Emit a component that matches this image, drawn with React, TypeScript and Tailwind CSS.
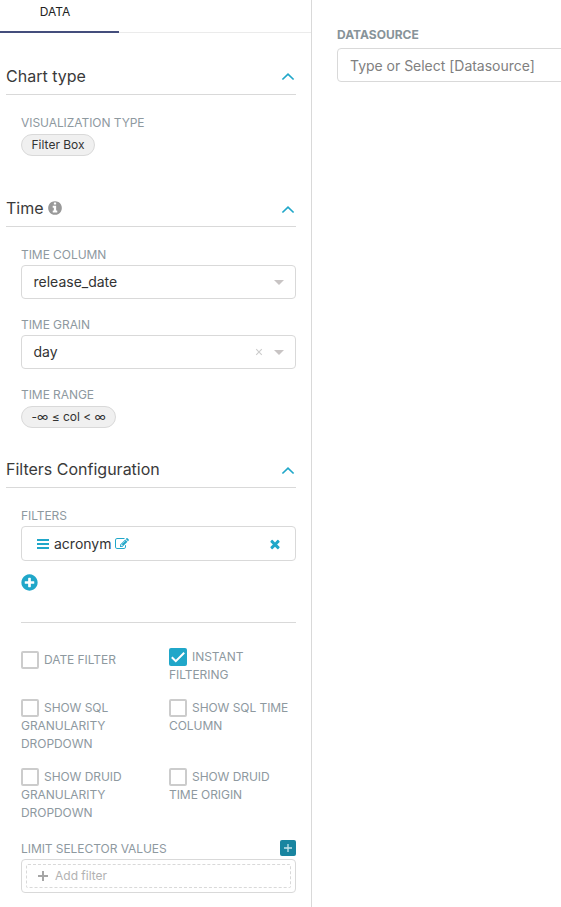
import React from "react";

const INFO =
  "M1152 1376v-160q0-14-9-23t-23-9h-96v-512q0-14-9-23t-23-9h-320q-14 0-23 9t-9 23v160q0 14 9 23t23 9h96v320h-96q-14 0-23 9t-9 23v160q0 14 9 23t23 9h448q14 0 23-9t9-23zm-128-896v-160q0-14-9-23t-23-9h-192q-14 0-23 9t-9 23v160q0 14 9 23t23 9h192q14 0 23-9t9-23zm640 416q0 209-103 385.5t-279.5 279.5-385.5 103-385.5-103-279.5-279.5-103-385.5 103-385.5 279.5-279.5 385.5-103 385.5 103 279.5 279.5 103 385.5z";
const EDIT =
  "M888 1184l116-116-152-152-116 116v56h96v96h56zm440-720q-16-16-33 1l-350 350q-17 17-1 33t33-1l350-350q17-17 1-33zm80 594v190q0 119-84.5 203.5t-203.5 84.5h-832q-119 0-203.5-84.5t-84.5-203.5v-832q0-119 84.5-203.5t203.5-84.5h832q63 0 117 25 15 7 18 23 3 17-9 29l-49 49q-14 14-32 8-23-6-45-6h-832q-66 0-113 47t-47 113v832q0 66 47 113t113 47h832q66 0 113-47t47-113v-126q0-13 9-22l64-64q15-15 35-7t20 29zm-96-738l288 288-672 672h-288v-288zm444 132l-92 92-288-288 92-92q28-28 68-28t68 28l152 152q28 28 28 68t-28 68z";
const TIMES =
  "M1490 1322q0 40-28 68l-136 136q-28 28-68 28t-68-28l-294-294-294 294q-28 28-68 28t-68-28l-136-136q-28-28-28-68t28-68l294-294-294-294q-28-28-28-68t28-68l136-136q28-28 68-28t68 28l294 294 294-294q28-28 68-28t68 28l136 136q28 28 28 68t-28 68l-294 294 294 294q28 28 28 68z";
const PLUS_CIRCLE =
  "M1344 960v-128q0-26-19-45t-45-19h-256v-256q0-26-19-45t-45-19h-128q-26 0-45 19t-19 45v256h-256q-26 0-45 19t-19 45v128q0 26 19 45t45 19h256v256q0 26 19 45t45 19h128q26 0 45-19t19-45v-256h256q26 0 45-19t19-45zm320-64q0 209-103 385.5t-279.5 279.5-385.5 103-385.5-103-279.5-279.5-103-385.5 103-385.5 279.5-279.5 385.5-103 385.5 103 279.5 279.5 103 385.5z";

function Glyph({ d, className }: { d: string; className: string }) {
  return (
    <svg viewBox="0 0 1792 1792" fill="currentColor" className={className}>
      <path d={d} />
    </svg>
  );
}

function SectionHeader({ title, info, chevron = "mt-[15px]" }: { title: string; info?: boolean; chevron?: string }) {
  return (
    <div className="ml-1.5 flex h-9 w-[290px] items-start justify-between border-b border-[#d9d9d9]">
      <h2 className="flex h-[33px] items-center text-base text-[#3a3a3a]">
        {title}
        {info && <Glyph d={INFO} className="mt-px ml-[3px] size-4 text-[#999]" />}
      </h2>
      <svg
        viewBox="0 0 14 10"
        className={"mr-px h-2.5 w-3.5 " + chevron}
        fill="none"
        stroke="#20a7c9"
        strokeWidth="1.7"
      >
        <path d="M1.4 7.5 7 2.2l5.6 5.3" />
      </svg>
    </div>
  );
}

function Label({ children }: { children: React.ReactNode }) {
  return <div className="h-5 text-xs leading-5 tracking-[-0.06px] text-[#8e999f]">{children}</div>;
}

function Pill({ children }: { children: React.ReactNode }) {
  return (
    <span className="flex h-[22px] w-fit items-center rounded-full border border-[#d9d9d9] bg-[#f0f0f0] px-[9.5px] text-xs whitespace-nowrap text-[#333]">
      {children}
    </span>
  );
}

function Select({ value, clearable }: { value: string; clearable?: boolean }) {
  return (
    <div className="flex h-[34px] items-center rounded border border-[#d9d9d9] pr-[11px] pl-[11.5px] text-sm text-[#333]">
      <span className="flex-1">{value}</span>
      {clearable && (
        <svg viewBox="0 0 8 8" className="mr-[11px] size-2" stroke="#ccc" strokeWidth="1.1">
          <path d="M1.2 1.2l5.6 5.6M6.8 1.2 1.2 6.8" />
        </svg>
      )}
      <span className="border-x-[5px] border-t-[5px] border-x-transparent border-t-[#c8c4c4]" />
    </div>
  );
}

function Check({ lines, checked }: { lines: string[]; checked?: boolean }) {
  return (
    <div className="w-[148px] shrink-0 text-xs leading-[18px] tracking-[-0.06px] text-[#8e999f]">
      <div className="flex h-[18px]">
        {checked ? (
          <svg viewBox="0 0 18 18" className="mr-[5px] size-[18px]">
            <rect width="18" height="18" rx="2" fill="#20a7c9" />
            <path d="M2.8 9.2 6.8 13.2 15.2 4.8" fill="none" stroke="#fff" strokeWidth="2" />
          </svg>
        ) : (
          <span className="mr-[5px] size-[18px] rounded-xs border-2 border-[#ccc]" />
        )}
        <span>{lines[0]}</span>
      </div>
      {lines.slice(1).map((line) => (
        <div key={line}>{line}</div>
      ))}
    </div>
  );
}

export default function App() {
  return (
    <div className="flex h-[907px] w-[561px] overflow-hidden bg-white font-['Inter',sans-serif]">
      <aside className="w-[312px] shrink-0 border-r border-[#d9d9d9]">
        <div className="flex h-[33px]">
          <div className="h-[33px] w-[119px] border-b-2 border-[#444e7c] pr-[9px] text-center text-xs leading-6 text-[#222]">DATA</div>
          <div className="flex-1 border-b border-[#ebebeb]" />
        </div>

        <section className="pt-[26px]">
          <SectionHeader title="Chart type" chevron="mt-[13px]" />
          <div className="mr-[15px] ml-[21px] pt-[18px]">
            <Label>VISUALIZATION TYPE</Label>
            <div className="mt-px"><Pill>Filter Box</Pill></div>
          </div>
        </section>

        <section className="pt-[35px]">
          <SectionHeader title="Time" info chevron="mt-[14px]" />
          <div className="mr-[15px] ml-[21px] pt-[18px]">
            <Label>TIME COLUMN</Label>
            <Select value="release_date" />
            <div className="h-4" />
            <Label>TIME GRAIN</Label>
            <Select value="day" clearable />
            <div className="h-4" />
            <Label>TIME RANGE</Label>
            <div className="mt-px"><Pill>-∞ ≤ col &lt; ∞</Pill></div>
          </div>
        </section>

        <section className="pt-6">
          <SectionHeader title="Filters Configuration" chevron="mt-[14px]" />
          <div className="mr-[15px] ml-[21px] pt-[18px]">
            <Label>FILTERS</Label>
            <div className="flex h-[35px] items-center rounded border border-[#d9d9d9] pr-[13px] pl-[15px] text-sm text-[#333]">
              <svg viewBox="0 0 12 10" className="mr-[5px] h-2.5 w-3" fill="#20a7c9">
                <path d="M0 0h12v2H0zM0 4h12v2H0zM0 8h12v2H0z" />
              </svg>
              <span>acronym</span>
              <Glyph d={EDIT} className="ml-[3px] size-[14px] text-[#20a7c9]" />
              <Glyph d={TIMES} className="ml-auto size-[14px] text-[#20a7c9]" />
            </div>
            <Glyph d={PLUS_CIRCLE} className="mt-3 -ml-[1.5px] size-[19px] text-[#20a7c9]" />
            <div className="mt-[30px] border-b border-[#d9d9d9]" />

            <div className="mt-[25px] flex">
              <div className="shrink-0 pt-[3px]"><Check lines={["DATE FILTER"]} /></div>
              <Check lines={["INSTANT", "FILTERING"]} checked />
            </div>
            <div className="mt-[15px] flex">
              <Check lines={["SHOW SQL", "GRANULARITY", "DROPDOWN"]} />
              <Check lines={["SHOW SQL TIME", "COLUMN"]} />
            </div>
            <div className="mt-[15px] flex">
              <Check lines={["SHOW DRUID", "GRANULARITY", "DROPDOWN"]} />
              <Check lines={["SHOW DRUID", "TIME ORIGIN"]} />
            </div>

            <div className="mt-[17px] flex items-start justify-between">
              <Label>LIMIT SELECTOR VALUES</Label>
              <svg viewBox="0 0 16 16" className="mt-px size-4">
                <rect width="16" height="16" rx="2" fill="#1985a0" />
                <path d="M4 8h8M8 4v8" stroke="#c5e3ea" strokeWidth="1.3" />
              </svg>
            </div>
            <div className="h-[34px] rounded border border-[#d9d9d9] p-1">
              <div className="flex h-6 items-center rounded-xs border border-dashed border-[#d9d9d9] pl-[11px] text-xs text-[#b2b2b2]">
                <svg viewBox="0 0 10 10" className="mr-[7px] size-2.5" stroke="#a6a6a6" strokeWidth="2">
                  <path d="M0 5h10M5 0v10" />
                </svg>
                Add filter
              </div>
            </div>
          </div>
        </section>
      </aside>

      <main className="min-w-0 flex-1 pt-[25px] pl-[25px]">
        <div className="h-5 text-xs leading-5 font-bold text-[#879399]">DATASOURCE</div>
        <div className="mt-[3px] flex h-[34px] w-[280px] items-center rounded border border-[#d9d9d9] pt-px pl-3 text-sm tracking-[-0.02px] whitespace-nowrap text-[#808080]">
          Type or Select [Datasource]
        </div>
      </main>
    </div>
  );
}
